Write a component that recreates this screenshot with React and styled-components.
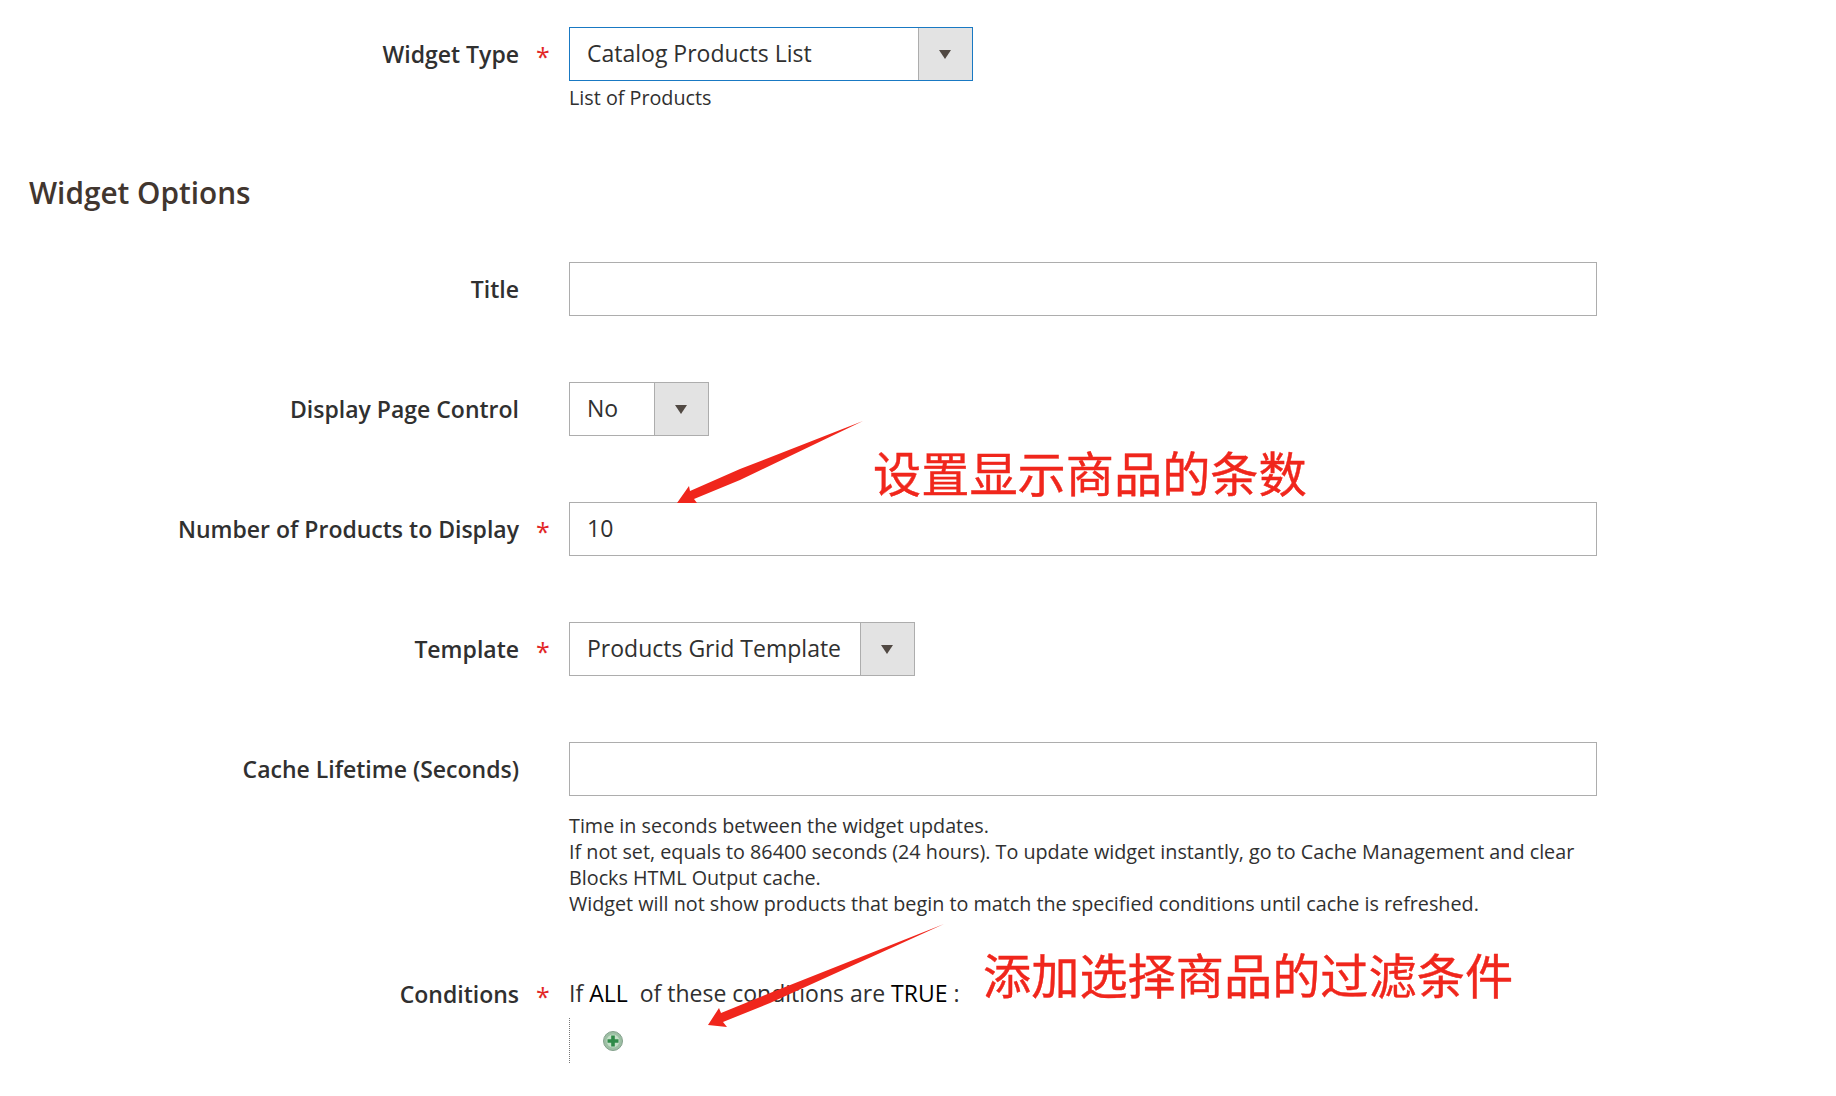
import React from 'react';
import styled, { createGlobalStyle } from 'styled-components';

const Global = createGlobalStyle`
  html, body { margin: 0; padding: 0; background: #fff; }
  body { font-family: "Open Sans", "Noto Sans", sans-serif; color: #303030; }
`;

const Page = styled.div`
  position: relative;
  width: 1836px;
  height: 1096px;
  overflow: hidden;
  box-sizing: border-box;
  padding-top: 27px;
`;

const Row = styled.div`
  display: grid;
  grid-template-columns: 519px 50px 1028px;
  align-items: start;
  margin-bottom: ${p => p.$gap ?? 66}px;
`;

const Label = styled.div`
  text-align: right;
  height: 54px;
  font-size: 23px;
  font-weight: 600;
  line-height: 55px;
  color: #303030;
`;

const Star = styled.div`
  text-align: center;
  padding-right: 2px;
  height: 54px;
  font-size: 25px;
  line-height: 59px;
  color: #e22626;
`;

const Control = styled.div`
  min-width: 0;
`;

const TextBox = styled.div`
  box-sizing: border-box;
  height: 54px;
  border: 1px solid #adadad;
  background: #fff;
  padding: 0 17px;
  font-size: 23px;
  line-height: 51px;
  color: #303030;
`;

const SelectBox = styled.div`
  box-sizing: border-box;
  display: flex;
  width: ${p => p.$width}px;
  height: 54px;
  border: 1px solid ${p => (p.$focused ? '#1979c3' : '#adadad')};
  background: #fff;
  font-size: 23px;
  line-height: 51px;
  color: #303030;
`;

const SelectValue = styled.div`
  flex: 1;
  padding-left: 17px;
  white-space: nowrap;
`;

const SelectButton = styled.div`
  flex: none;
  display: flex;
  align-items: center;
  justify-content: center;
  width: 54px;
  background: #e3e3e3;
  border-left: 1px solid #adadad;
  box-sizing: border-box;
`;

const Caret = styled.span`
  width: 0;
  height: 0;
  margin-right: 1px;
  border-left: 6px solid transparent;
  border-right: 6px solid transparent;
  border-top: 9px solid #514943;
`;

const Note = styled.div`
  font-size: 19.75px;
  line-height: 26px;
  color: #303030;
  margin-top: ${p => p.$top ?? 0}px;
`;

const Heading = styled.h2`
  margin: 0 0 50px 29px;
  font-size: 29.75px;
  font-weight: 600;
  line-height: 38px;
  color: #41362f;
`;

const ConditionText = styled.div`
  font-size: 23px;
  line-height: 52px;
  height: 54px;
  color: #303030;
  white-space: pre;
  b { font-weight: 400; color: #000; }
`;

const ConditionTree = styled.div`
  display: flex;
  align-items: center;
  height: 44px;
  margin-top: -3px;
  padding: 1px 0 0 33px;
  border-left: 1px dotted #777;
`;

const Callout = styled.div`
  position: absolute;
  left: ${p => p.$x}px;
  top: ${p => p.$y}px;
  font-family: "Noto Sans CJK SC", sans-serif;
  font-size: 48.2px;
  font-weight: 400;
  -webkit-text-stroke: 0.4px #f0261c;
  line-height: 60px;
  color: #f0261c;
  white-space: nowrap;
`;

const Overlay = styled.svg`
  position: absolute;
  left: 0;
  top: 0;
  pointer-events: none;
`;

function Field({ label, required, children, gap }) {
  return (
    <Row $gap={gap}>
      <Label>{label}</Label>
      <Star>{required ? '*' : ''}</Star>
      <Control>{children}</Control>
    </Row>
  );
}

function Select({ value, width, focused }) {
  return (
    <SelectBox $width={width} $focused={focused}>
      <SelectValue>{value}</SelectValue>
      <SelectButton><Caret /></SelectButton>
    </SelectBox>
  );
}

function AddIcon() {
  return (
    <svg width="20" height="20" viewBox="0 0 20 20">
      <circle cx="10" cy="10" r="9.5" fill="#9dbfa4" stroke="#84a08c" />
      <circle cx="10" cy="10" r="6.5" fill="#c5dfc8" />
      <path d="M8.2 4.5h3.6v3.7h3.7v3.6h-3.7v3.7H8.2v-3.7H4.5V8.2h3.7z" fill="#2f8a48" />
    </svg>
  );
}

export default function App() {
  return (
    <Page>
      <Global />
      <Field label="Widget Type" required gap={63}>
        <Select value="Catalog Products List" width={404} focused />
        <Note $top={4}>List of Products</Note>
      </Field>
      <Heading>Widget Options</Heading>
      <Field label="Title"><TextBox /></Field>
      <Field label="Display Page Control"><Select value="No" width={140} /></Field>
      <Field label="Number of Products to Display" required><TextBox>10</TextBox></Field>
      <Field label="Template" required><Select value="Products Grid Template" width={346} /></Field>
      <Field label="Cache Lifetime (Seconds)" gap={50}>
        <TextBox />
        <Note $top={17}>
          Time in seconds between the widget updates.<br />
          If not set, equals to 86400 seconds (24 hours). To update widget instantly, go to Cache Management and clear Blocks HTML Output cache.<br />
          Widget will not show products that begin to match the specified conditions until cache is refreshed.
        </Note>
      </Field>
      <Field label="Conditions" required gap={0}>
        <ConditionText>If <b>ALL</b>  of these conditions are <b>TRUE</b> :</ConditionText>
        <ConditionTree><AddIcon /></ConditionTree>
      </Field>
      <Callout $x={873} $y={441}>设置显示商品的条数</Callout>
      <Callout $x={983} $y={943}>添加选择商品的过滤条件</Callout>
      <Overlay width="1836" height="1096">
        <polygon points="677,503 689,486 690,491 740,469 863,421 740,480 694,499 697,503" fill="#f0261c" />
        <polygon points="708,1025 719,1008 721,1013 770,993 944,924 770,1003 723,1022 727,1027" fill="#f0261c" />
      </Overlay>
    </Page>
  );
}
